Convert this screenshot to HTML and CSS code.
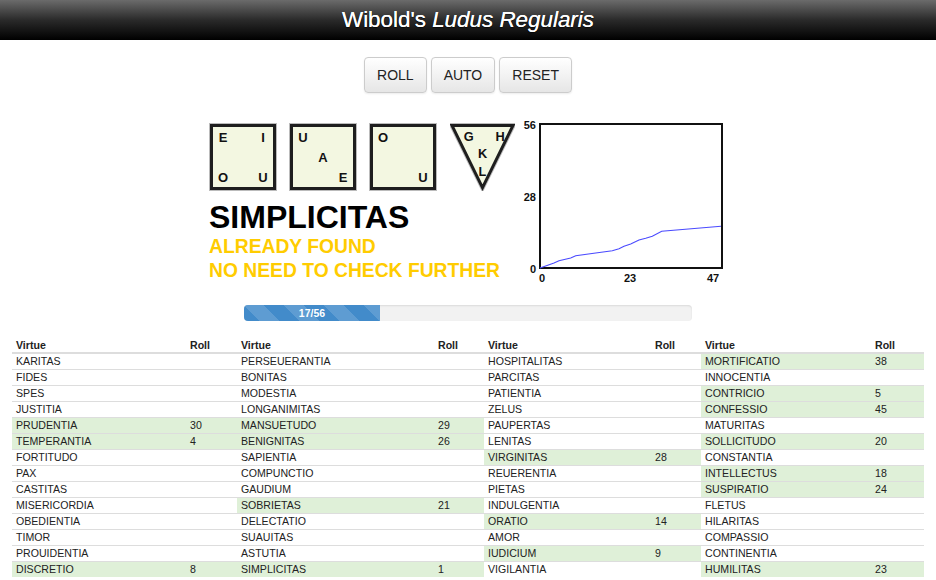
FILE: index.html
```html
<!DOCTYPE html>
<html>
<head>
<meta charset="utf-8">
<title>Wibold's Ludus Regularis</title>
<link rel="stylesheet" href="styles.css">
</head>
<body>
<header class="topbar"><h1>Wibold's <i>Ludus Regularis</i></h1></header>

<div class="controls">
  <button class="btn">ROLL</button>
  <button class="btn">AUTO</button>
  <button class="btn">RESET</button>
</div>

<div class="stage">
  <div class="play">
    <div class="dice">
      <div class="die">
        <span class="c1">E</span><span class="c3">I</span>
        <span class="c7">O</span><span class="c9">U</span>
      </div>
      <div class="die">
        <span class="c1">U</span><span class="c5">A</span><span class="c9">E</span>
      </div>
      <div class="die">
        <span class="c1">O</span><span class="c9">U</span>
      </div>
      <svg class="tri" width="66" height="68" viewBox="0 0 66 68">
        <polygon points="2,2 64,2 33,65" fill="#f3f7e1" stroke="#bbb" stroke-width="5" stroke-linejoin="miter"/>
        <polygon points="2,2 64,2 33,65" fill="#f3f7e1" stroke="#1e1e1e" stroke-width="3" stroke-linejoin="miter"/>
        <g class="tri-txt">
          <text x="19" y="18" text-anchor="middle">G</text>
          <text x="51" y="18" text-anchor="middle">H</text>
          <text x="33" y="35" text-anchor="middle">K</text>
          <text x="33" y="53" text-anchor="middle">L</text>
        </g>
      </svg>
    </div>
    <div class="word">SIMPLICITAS</div>
    <div class="msg">ALREADY FOUND<br>NO NEED TO CHECK FURTHER</div>
  </div>
  <svg class="chart" width="210" height="170" viewBox="0 0 210 170">
    <rect x="21" y="9" width="182" height="144" fill="#fff" stroke="#111" stroke-width="2"/>
    <g transform="translate(20,9)">
      <polyline fill="none" stroke="#4a4aff" stroke-width="1.1" points="1,144 15,139 20,136.7 31.7,134 36.7,131.7 56.7,129 73.3,126.7 80,124.7 85,122.3 91.7,120 100,116 106.7,114.3 113.3,112.3 122.7,107.3 182,102.3"/>
    </g>
    <g class="ax">
      <text x="17" y="14" text-anchor="end">56</text>
      <text x="17" y="86" text-anchor="end">28</text>
      <text x="17" y="158" text-anchor="end">0</text>
      <text x="23" y="167" text-anchor="middle">0</text>
      <text x="111" y="167" text-anchor="middle">23</text>
      <text x="194" y="167" text-anchor="middle">47</text>
    </g>
  </svg>
</div>

<div class="progress"><div class="bar" style="width:30.36%">17/56</div></div>

<table class="virtues">
  <colgroup>
    <col style="width:174px"><col style="width:51px">
    <col style="width:197px"><col style="width:50px">
    <col style="width:167px"><col style="width:50px">
    <col style="width:170px"><col style="width:53px">
  </colgroup>
  <thead>
    <tr><th>Virtue</th><th>Roll</th><th>Virtue</th><th>Roll</th><th>Virtue</th><th>Roll</th><th>Virtue</th><th>Roll</th></tr>
  </thead>
  <tbody>
    <tr><td>KARITAS</td><td></td><td>PERSEUERANTIA</td><td></td><td>HOSPITALITAS</td><td></td><td class="ok">MORTIFICATIO</td><td class="ok">38</td></tr>
    <tr><td>FIDES</td><td></td><td>BONITAS</td><td></td><td>PARCITAS</td><td></td><td>INNOCENTIA</td><td></td></tr>
    <tr><td>SPES</td><td></td><td>MODESTIA</td><td></td><td>PATIENTIA</td><td></td><td class="ok">CONTRICIO</td><td class="ok">5</td></tr>
    <tr><td>JUSTITIA</td><td></td><td>LONGANIMITAS</td><td></td><td>ZELUS</td><td></td><td class="ok">CONFESSIO</td><td class="ok">45</td></tr>
    <tr><td class="ok">PRUDENTIA</td><td class="ok">30</td><td class="ok">MANSUETUDO</td><td class="ok">29</td><td>PAUPERTAS</td><td></td><td>MATURITAS</td><td></td></tr>
    <tr><td class="ok">TEMPERANTIA</td><td class="ok">4</td><td class="ok">BENIGNITAS</td><td class="ok">26</td><td>LENITAS</td><td></td><td class="ok">SOLLICITUDO</td><td class="ok">20</td></tr>
    <tr><td>FORTITUDO</td><td></td><td>SAPIENTIA</td><td></td><td class="ok">VIRGINITAS</td><td class="ok">28</td><td>CONSTANTIA</td><td></td></tr>
    <tr><td>PAX</td><td></td><td>COMPUNCTIO</td><td></td><td>REUERENTIA</td><td></td><td class="ok">INTELLECTUS</td><td class="ok">18</td></tr>
    <tr><td>CASTITAS</td><td></td><td>GAUDIUM</td><td></td><td>PIETAS</td><td></td><td class="ok">SUSPIRATIO</td><td class="ok">24</td></tr>
    <tr><td>MISERICORDIA</td><td></td><td class="ok">SOBRIETAS</td><td class="ok">21</td><td>INDULGENTIA</td><td></td><td>FLETUS</td><td></td></tr>
    <tr><td>OBEDIENTIA</td><td></td><td>DELECTATIO</td><td></td><td class="ok">ORATIO</td><td class="ok">14</td><td>HILARITAS</td><td></td></tr>
    <tr><td>TIMOR</td><td></td><td>SUAUITAS</td><td></td><td>AMOR</td><td></td><td>COMPASSIO</td><td></td></tr>
    <tr><td>PROUIDENTIA</td><td></td><td>ASTUTIA</td><td></td><td class="ok">IUDICIUM</td><td class="ok">9</td><td>CONTINENTIA</td><td></td></tr>
    <tr><td class="ok">DISCRETIO</td><td class="ok">8</td><td class="ok">SIMPLICITAS</td><td class="ok">1</td><td>VIGILANTIA</td><td></td><td class="ok">HUMILITAS</td><td class="ok">23</td></tr>
  </tbody>
</table>
</body>
</html>
```

FILE: styles.css
```css
* { box-sizing: border-box; }
html, body { margin: 0; padding: 0; background: #fff; }
body {
  font-family: "Liberation Sans", Arial, Helvetica, sans-serif;
  color: #333;
}
.topbar {
  height: 40px;
  background: linear-gradient(to bottom, #6b6b6b 0%, #2a2a2a 50%, #000 100%);
  display: flex;
  align-items: center;
  justify-content: center;
}
.topbar h1 {
  margin: 0;
  font-size: 22.4px;
  font-weight: normal;
  color: #fff;
  text-shadow: 0 0 0.6px #fff, 0 1px 1px rgba(0,0,0,0.7);
}
.topbar h1 i { font-style: italic; }

.controls {
  margin-top: 17px;
  display: flex;
  justify-content: center;
  gap: 4px;
}
.btn {
  font-family: "Liberation Sans", Arial, sans-serif;
  font-size: 14px;
  line-height: 20px;
  padding: 7px 12px;
  color: #222;
  background: linear-gradient(to bottom, #fff 0%, #e6e6e6 100%);
  border: 1px solid #ccc;
  border-radius: 4px;
  box-shadow: 0 1px 2px rgba(0,0,0,0.08);
}

.stage {
  margin-top: 22px;
  display: flex;
  justify-content: center;
  align-items: flex-start;
  gap: 4px;
  padding-left: 2px;
}
.play { padding-top: 9px; width: 306px; }
.dice { display: flex; gap: 14px; align-items: flex-start; padding-left: 1px; }
.die {
  width: 66px;
  height: 66px;
  border: 3px solid #1e1e1e;
  box-shadow: 0 0 0 1px #bbb;
  background: #f3f7e1;
  display: grid;
  grid-template-columns: repeat(3, 20px);
  grid-template-rows: repeat(3, 20px);
  font-weight: bold;
  font-size: 13px;
  color: #111;
}
.die span { display: flex; align-items: center; justify-content: center; }
.c1 { grid-area: 1 / 1; }
.c3 { grid-area: 1 / 3; }
.c5 { grid-area: 2 / 2; }
.c7 { grid-area: 3 / 1; }
.c9 { grid-area: 3 / 3; }
.tri { display: block; margin-top: -1px; }
.tri-txt text {
  font-family: "Liberation Sans", Arial, sans-serif;
  font-weight: bold;
  font-size: 13px;
  fill: #111;
}
.word {
  margin-top: 9px;
  font-size: 32px;
  line-height: 35px;
  font-weight: bold;
  color: #000;
}
.msg {
  font-size: 19.3px;
  line-height: 24px;
  font-weight: bold;
  color: #ffcc00;
  white-space: nowrap;
}
.chart { display: block; }
.ax text {
  font-family: "Liberation Sans", Arial, sans-serif;
  font-weight: bold;
  font-size: 11px;
  fill: #111;
}

.progress {
  width: 448px;
  height: 16px;
  margin: 20px auto 0;
  background: #f2f2f2;
  border-radius: 4px;
  box-shadow: inset 0 1px 2px rgba(0,0,0,0.1);
  overflow: hidden;
}
.bar {
  height: 100%;
  background-color: #428bca;
  background-image: linear-gradient(45deg, rgba(255,255,255,.15) 25%, transparent 25%, transparent 50%, rgba(255,255,255,.15) 50%, rgba(255,255,255,.15) 75%, transparent 75%, transparent);
  background-size: 40px 40px;
  color: #fff;
  font-size: 10.5px;
  font-weight: bold;
  line-height: 16px;
  text-align: center;
}

.virtues {
  margin: 17px 12px 0;
  width: 912px;
  table-layout: fixed;
  border-collapse: separate;
  border-spacing: 0;
  font-size: 10.6px;
  color: #222;
}
.virtues th {
  text-align: left;
  font-weight: bold;
  line-height: 14px;
  padding: 0 4px;
  border-bottom: 1px solid #ddd;
}
.virtues td {
  line-height: 15px;
  padding: 0 4px;
  border-top: 1px solid #ddd;
  white-space: nowrap;
}
.virtues td.ok { background: #dff0d8; }
```
